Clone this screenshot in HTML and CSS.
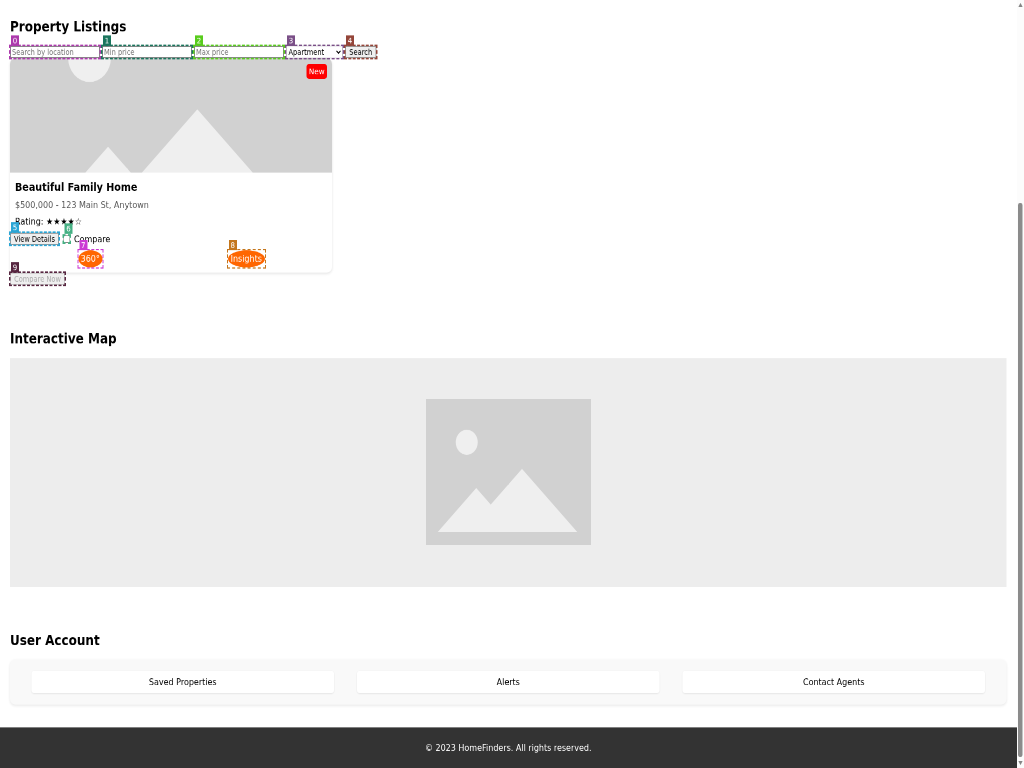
FILE: index.html
```html
<!DOCTYPE html>
<html lang="en">
<head>
<meta charset="utf-8">
<title>HomeFinders</title>
<link rel="stylesheet" href="styles.css">
</head>
<body>
<svg class="defs" width="0" height="0">
  <symbol id="placeholder" viewBox="0 0 330 256" preserveAspectRatio="xMidYMid slice">
    <rect width="330" height="256" fill="#d1d1d1"/>
    <circle cx="81.500" cy="76" r="22" fill="#efefef"/>
    <path d="M23.5 233L100.500 156L129.500 185L192 122.500L302.500 233Z" fill="#efefef"/>
  </symbol>
</svg>
<div class="window">
<div class="page">
  <main>
    <section class="listings">
      <h2>Property Listings</h2>
      <div class="search">
        <div class="mark purple w-input"><b class="tag">0</b><input type="text" placeholder="Search by location"></div>
        <div class="mark teal w-input"><b class="tag">1</b><input type="text" placeholder="Min price"></div>
        <div class="mark green w-input"><b class="tag">2</b><input type="text" placeholder="Max price"></div>
        <div class="mark violet w-select"><b class="tag">3</b><select><option>Apartment</option></select></div>
        <div class="mark brick w-search"><b class="tag">4</b><button>Search</button></div>
      </div>
      <article class="card">
        <div class="photo">
          <svg width="644" height="200"><use href="#placeholder" width="644" height="200"/></svg>
          <span class="new">New</span>
        </div>
        <h3>Beautiful Family Home</h3>
        <p class="price">$500,000 - 123 Main St, Anytown</p>
        <p class="rating">Rating: ★★★★☆</p>
        <div class="actions">
          <div class="mark blue w-view"><b class="tag">5</b><button>View Details</button></div>
          <div class="mark mint w-check"><b class="tag">6</b><input type="checkbox"></div>
          <span>Compare</span>
        </div>
        <div class="tours">
          <div class="mark magenta tour w-tour"><b class="tag">7</b><span class="pill">360°</span></div>
          <div class="mark amber tour w-insights"><b class="tag">8</b><span class="pill">Insights</span></div>
        </div>
      </article>
      <div class="mark maroon w-compare"><b class="tag">9</b><button disabled>Compare Now</button></div>
    </section>
    <section class="map-section">
      <h2>Interactive Map</h2>
      <div class="map"><svg width="330" height="256"><use href="#placeholder" width="330" height="256"/></svg></div>
    </section>
    <section class="account-section">
      <h2>User Account</h2>
      <div class="account">
        <div class="item">Saved Properties</div>
        <div class="item">Alerts</div>
        <div class="item">Contact Agents</div>
      </div>
    </section>
    <footer>© 2023 HomeFinders. All rights reserved.</footer>
  </main>
  <aside class="scrollbar">
    <svg class="arrow" viewBox="0 0 7 6"><path d="M3.5 0L7 6H0Z"/></svg>
    <div class="thumb"></div>
    <svg class="arrow" viewBox="0 0 7 6"><path d="M0 0H7L3.500 6Z"/></svg>
  </aside>
</div>
</div>
</body>
</html>
```
FILE: styles.css
```css
* { box-sizing: border-box; }
html, body { margin: 0; width: 1024px; height: 768px; overflow: hidden; background: #fff; }
.defs { display: block; }
.window { width: 1024px; height: 768px; overflow: hidden; }

/* The page is laid out at 2048x1344 and scaled into the window. */
.page {
  display: flex;
  width: 2048px;
  height: 1344px;
  transform: scale(0.5, 0.5714286);
  transform-origin: 0 0;
  will-change: transform;
  background: #fff;
  font: 16px/19px "DejaVu Sans", sans-serif;
  color: #000;
}
main { width: 2033px; display: flex; flex-direction: column; }
h2, h3, p { margin: 0; }
h2 { font-size: 24px; line-height: 28px; }
section { padding: 0 20px; }

.listings { height: 579px; padding-top: 33px; }
.listings h2 { margin-bottom: 19px; }
.search { display: flex; gap: 4px; height: 22px; }

.mark { position: relative; height: 22px; outline: 3px dashed var(--c); outline-offset: -1px; z-index: 1; }
.tag {
  position: absolute; left: 2px; top: -18px; width: 16px; height: 18px;
  background: var(--c); color: #fff; font-size: 14px; font-weight: normal;
  line-height: 18px; text-align: center;
}
.mark input, .mark select, .mark button {
  display: block; width: 100%; height: 100%; margin: 0;
  font: 13.333px "DejaVu Sans", sans-serif;
}
.mark input[type="text"] { border: 2px solid #888; padding: 1px 2px; }
.mark input::placeholder { color: #757575; }
.mark select { border: 1px solid #777; background: #fff; padding: 0; color: #000; }
.mark button { border: 2px solid #999; background: #efefef; padding: 0; color: #000; white-space: nowrap; }
.mark button:disabled { border-color: #ccc; color: #aaa; }
.purple { --c: #ad3aad; }
.teal { --c: #1b755d; }
.green { --c: #58cc1c; }
.violet { --c: #7a4f87; }
.brick { --c: #944539; }
.blue { --c: #2aa5d5; }
.mint { --c: #45b083; }
.magenta { --c: #cc3bd4; }
.amber { --c: #c4761c; }
.maroon { --c: #572640; }
.w-input { width: 180px; }
.w-select { width: 114px; }
.w-search { width: 63px; }
.w-view { width: 98px; }
.w-check { width: 13px; }
.w-compare { width: 110px; }

.card { width: 644px; height: 375px; border-radius: 10px; box-shadow: 0 2px 5px rgba(0, 0, 0, .12); }
.photo { position: relative; height: 200px; }
.photo svg { display: block; border-radius: 10px 10px 0 0; }
.new {
  position: absolute; top: 10px; right: 10px; width: 41px; height: 26px;
  border-radius: 5px; background: #f00; color: #fff;
  font-size: 14.4px; line-height: 26px; text-align: center;
}
.card h3 { padding: 15px 10px 0; font-size: 19.2px; line-height: 22px; }
.price { padding: 10px 10px 0; color: #555; }
.rating { padding: 10px 10px 0; }
.actions { display: flex; align-items: center; height: 22px; margin-top: 10px; }
.w-check { height: 13px; margin: 0 8px 0 9px; }
.w-check .tag { top: -21px; }
.tours { display: flex; justify-content: space-around; height: 30px; margin-top: 9px; padding: 0 9px 0 11px; }
.tour { height: 30px; outline-width: 2px; outline-offset: 0; }
.w-tour { width: 48px; }
.w-insights { width: 74px; }
.pill { display: block; height: 30px; border-radius: 50%; background: #f60; color: #fff; line-height: 30px; text-align: center; }

.map-section h2 { margin-bottom: 20px; }
.map { display: flex; align-items: center; justify-content: center; height: 400px; background: #ededed; }
.map svg { margin-bottom: 3px; }
.account-section { padding-top: 80px; }
.account-section h2 { margin-bottom: 19px; }
.account {
  display: flex; justify-content: space-around; height: 79px; padding: 20px;
  border-radius: 10px; background: #f9f9f9; box-shadow: 0 2px 5px rgba(0, 0, 0, .1);
}
.item { width: 605px; height: 39px; line-height: 39px; text-align: center; background: #fff; border-radius: 5px; box-shadow: 0 1px 3px rgba(0, 0, 0, .1); }
footer { height: 71px; margin-top: auto; background: #333; color: #fff; line-height: 71px; text-align: center; }

.scrollbar { display: flex; flex-direction: column; align-items: center; justify-content: space-between; width: 15px; padding: 5px 0; background: #fcfcfc; }
.arrow { width: 12px; height: 7px; fill: #858585; }
.thumb { width: 9px; height: 970px; margin-top: auto; margin-bottom: 7px; border-radius: 5px; background: #8b8b8b; }
```
